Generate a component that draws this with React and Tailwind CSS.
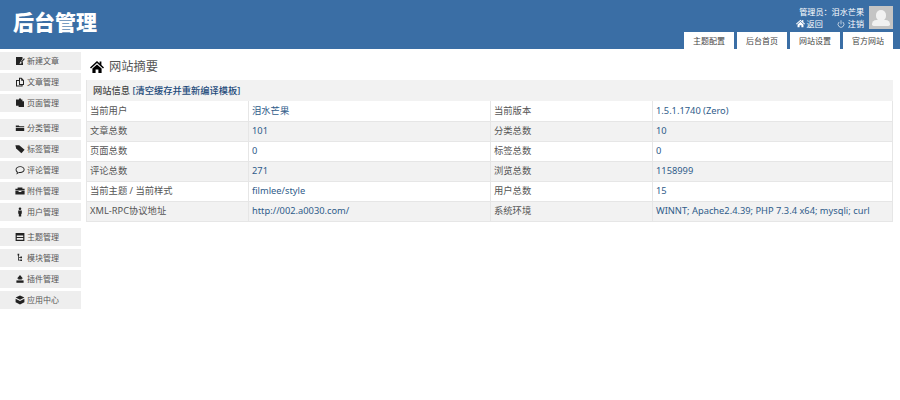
import { Power } from "lucide-react";

const font = { fontFamily: '"Noto Sans", "Noto Sans CJK SC", sans-serif' };

function Glyph({ children }) {
  return (
    <svg viewBox="0 0 10 10" width="10" height="10" fill="#222" className="shrink-0">
      {children}
    </svg>
  );
}

const HomeGlyph = ({ size = 10, fill = "#222" }) => (
  <svg viewBox="0 0 14 14" width={size} height={size} fill={fill} className="shrink-0">
    <path d="M7 1 0 7.4l1 1.1L7 3.1l6 5.4 1-1.1-2.6-2.4V1.6H9.6v1.9z" />
    <path d="M7 4.4 2.4 8.6V13h3.2V9.6h2.8V13h3.2V8.6z" />
  </svg>
);

const menuGroups = [
  [
    { label: "新建文章", icon: <Glyph><path d="M1 1h6.5v2L5 6.5 4.6 8l1.6-.4L8 5.5V9H1z" /><path d="M5.8 6 9 2.2l.8.7-3.2 3.8z" /></Glyph> },
    { label: "文章管理", icon: <Glyph><path fillRule="evenodd" d="M4 .8h2.6L9 3.2V8H7.6v1.4H1V3h3zM2 4v4.4h4.6V8H4V4zm3-2.2V7h3V3.8H6.2V1.8z" /></Glyph> },
    { label: "页面管理", icon: <Glyph><path d="M1 1.6h3V.6h2v1h1.4v1.6H9V9H3.6V7.8H1z" /></Glyph> },
  ],
  [
    { label: "分类管理", icon: <Glyph><path d="M.8 2.4h3l.7.8h4.7v1H.8z" /><path d="M.8 5h8.4v3H.8z" /></Glyph> },
    { label: "标签管理", icon: <Glyph><path d="M.4 1.2h3.8l5.4 4.6-3.2 3.4L1.2 4.6z" /></Glyph> },
    { label: "评论管理", icon: <Glyph><path fillRule="evenodd" d="M5.2 1.2c2.5 0 4.4 1.4 4.4 3.4S7.7 8 5.2 8H3.8L1.4 9.4l.5-2C.9 6.7.6 5.7.6 4.6c0-2 2-3.4 4.6-3.4zm0 .8c-2.1 0-3.7 1.1-3.7 2.6 0 .9.5 1.7 1.4 2.3l-.2 1 1.3-.8h1.2c2.1 0 3.500-1 3.500-2.500S7.300 2 5.200 2z" /></Glyph> },
    { label: "附件管理", icon: <Glyph><path d="M2.6 1.6h4.8v1.2h2.2v1.600H.4V2.800h2.200z" /><path d="M.4 5h3.2v1h2.800V5h3.200v3.400H.4z" /></Glyph> },
    { label: "用户管理", icon: <Glyph><circle cx="5" cy="1.8" r="1.3" /><path d="M3.2 3.6h3.6v3.2h-.6v2.800H3.800V6.800h-.6z" /></Glyph> },
  ],
  [
    { label: "主题管理", icon: <Glyph><path fillRule="evenodd" d="M.6 1h8.8v8H.6zM1.800 3.400v1.600h6.400V3.400zm0 2.600v1.800h6.400V6z" /></Glyph> },
    { label: "模块管理", icon: <Glyph><path d="M2.6.8h1.6v1.600H2.600zM3 2.400h.8v2.400H3zM3.600 4.200h2v.8h-2zM5.400 3.600h1.600v1.600H5.400zM3 5h.8v2.400H3zM3.600 6.800h2v.8h-2zM5.400 6.400h1.600V8H5.400z" /></Glyph> },
    { label: "插件管理", icon: <Glyph><path d="M5 1 8 4.600H6.800v1H3.200v-1H2z" /><path d="M1.400 6.400h7.200v2.400H1.400z" /></Glyph> },
    { label: "应用中心", icon: <Glyph><path d="M5 .4 9.400 2.600 5 4.800.6 2.600z" /><path d="M.6 3.800 5 6l4.400-2.200V7.200L5 9.600.6 7.200z" /></Glyph> },
  ],
];

const rows = [
  ["当前用户", "泪水芒果", "当前版本", "1.5.1.1740 (Zero)"],
  ["文章总数", "101", "分类总数", "10"],
  ["页面总数", "0", "标签总数", "0"],
  ["评论总数", "271", "浏览总数", "1158999"],
  ["当前主题 / 当前样式", "filmlee/style", "用户总数", "15"],
  ["XML-RPC协议地址", "http://002.a0030.com/", "系统环境", "WINNT; Apache2.4.39; PHP 7.3.4 x64; mysqli; curl"],
];

const tabs = ["主题配置", "后台首页", "网站设置", "官方网站"];

function Header() {
  return (
    <div className="h-[49px] bg-[#3a6ea5] flex justify-between pl-[13px] pr-[7px]">
      <div className="text-white text-[21px] font-black leading-[44px]">后台管理</div>
      <div className="flex flex-col items-end">
        <div className="flex gap-[5px] pt-[6px]">
          <div className="text-white text-[8.1px] leading-[11px] text-right">
            <div>管理员：泪水芒果</div>
            <div className="flex justify-end items-center gap-[14px] mt-[1px]">
              <span className="flex items-center gap-[2px]"><HomeGlyph size={9} fill="#fff" />返回</span>
              <span className="flex items-center gap-[3px]"><Power size={8} strokeWidth={2} />注销</span>
            </div>
          </div>
          <div className="w-[24px] h-[23px] bg-[#c4c4c4] flex flex-col items-center justify-end pb-[3px] overflow-hidden">
            <div className="w-[10px] h-[11px] rounded-full bg-[#f1f1f1]" />
            <div className="w-[18px] h-[6px] -mt-[1px] rounded-t-[5px] rounded-b-[2px] bg-[#f1f1f1]" />
          </div>
        </div>
        <div className="flex gap-[3px] mt-[3px]">
          {tabs.map((t) => (
            <div key={t} className="w-[50px] h-[17px] bg-white text-[#444] text-[8px] leading-[18px] text-center">{t}</div>
          ))}
        </div>
      </div>
    </div>
  );
}

function Sidebar() {
  return (
    <div className="w-[81px] shrink-0 pt-[3px] flex flex-col gap-[7px]">
      {menuGroups.map((group, i) => (
        <div key={i} className="flex flex-col gap-[3px]">
          {group.map((item) => (
            <div key={item.label} className="h-[18px] bg-[#eeeeee] flex items-center pl-[15px] gap-[2px] text-[8px] text-[#555]">
              {item.icon}
              {item.label}
            </div>
          ))}
        </div>
      ))}
    </div>
  );
}

function Summary() {
  return (
    <div className="flex-1 pl-[5px] pr-[7px]">
      <div className="h-[31px] flex items-center gap-[5px] pl-[4px] pt-[5px] text-[12.25px] text-[#555]">
        <HomeGlyph size={14} fill="#000" />
        网站摘要
      </div>
      <div className="h-[21px] bg-[#f2f2f2] border-l border-[#e5e5e5] flex items-center pl-[6px] text-[9.25px] font-medium text-[#444]">
        网站信息&nbsp;<span className="text-[#1d4a7a]">[清空缓存并重新编译模板]</span>
      </div>
      <table className="w-full table-fixed border-collapse text-[9.3px] text-[#555]">
        <colgroup>
          <col className="w-[162px]" />
          <col className="w-[242px]" />
          <col className="w-[162px]" />
          <col />
        </colgroup>
        <tbody>
          {rows.map((r, i) => (
            <tr key={i} className={`h-[20px] ${i % 2 ? "bg-[#f2f2f2]" : "bg-white"}`}>
              {r.map((c, j) => (
                <td key={j} className={`border border-[#e6e6e6] border-t-0 px-[3px] py-0 ${j % 2 ? "text-[#2f5c8a]" : ""}`}>{c}</td>
              ))}
            </tr>
          ))}
        </tbody>
      </table>
    </div>
  );
}

export default function App() {
  return (
    <div className="w-[900px] h-[400px] bg-white overflow-hidden" style={font}>
      <Header />
      <div className="flex">
        <Sidebar />
        <Summary />
      </div>
    </div>
  );
}
